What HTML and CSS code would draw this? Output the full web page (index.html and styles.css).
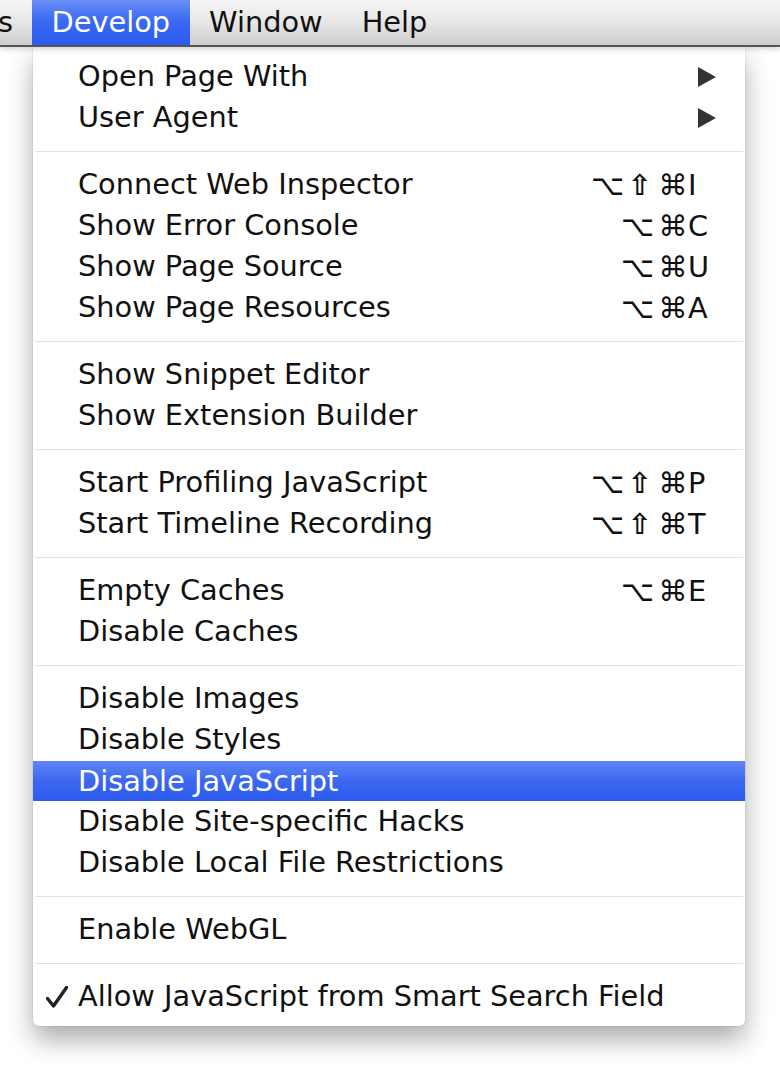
FILE: index.html
```html
<!DOCTYPE html>
<html>
<head>
<meta charset="utf-8">
<link rel="stylesheet" href="styles.css">
</head>
<body>
<div class="menubar">
  <span class="title prev">s</span>
  <span class="title active">Develop</span>
  <span class="title">Window</span>
  <span class="title">Help</span>
</div>
<div class="stage">
  <div class="menu">
    <div class="row"><span class="check"></span><span class="label">Open Page With</span><span class="sc"><svg class="arrow" viewBox="0 0 18 20"><path d="M0 0 L18 10 L0 20 Z"/></svg></span></div>
    <div class="row"><span class="check"></span><span class="label">User Agent</span><span class="sc"><svg class="arrow" viewBox="0 0 18 20"><path d="M0 0 L18 10 L0 20 Z"/></svg></span></div>
    <div class="sep"></div>
    <div class="row"><span class="check"></span><span class="label">Connect Web Inspector</span><span class="sc"><span class="mods"><span>⌥</span><span class="shift">⇧</span><span>⌘</span></span><span class="key">I</span></span></div>
    <div class="row"><span class="check"></span><span class="label">Show Error Console</span><span class="sc"><span class="mods"><span>⌥</span><span>⌘</span></span><span class="key">C</span></span></div>
    <div class="row"><span class="check"></span><span class="label">Show Page Source</span><span class="sc"><span class="mods"><span>⌥</span><span>⌘</span></span><span class="key">U</span></span></div>
    <div class="row"><span class="check"></span><span class="label">Show Page Resources</span><span class="sc"><span class="mods"><span>⌥</span><span>⌘</span></span><span class="key">A</span></span></div>
    <div class="sep"></div>
    <div class="row"><span class="check"></span><span class="label">Show Snippet Editor</span></div>
    <div class="row"><span class="check"></span><span class="label">Show Extension Builder</span></div>
    <div class="sep"></div>
    <div class="row"><span class="check"></span><span class="label">Start Profiling JavaScript</span><span class="sc"><span class="mods"><span>⌥</span><span class="shift">⇧</span><span>⌘</span></span><span class="key">P</span></span></div>
    <div class="row"><span class="check"></span><span class="label">Start Timeline Recording</span><span class="sc"><span class="mods"><span>⌥</span><span class="shift">⇧</span><span>⌘</span></span><span class="key">T</span></span></div>
    <div class="sep"></div>
    <div class="row"><span class="check"></span><span class="label">Empty Caches</span><span class="sc"><span class="mods"><span>⌥</span><span>⌘</span></span><span class="key">E</span></span></div>
    <div class="row"><span class="check"></span><span class="label">Disable Caches</span></div>
    <div class="sep"></div>
    <div class="row"><span class="check"></span><span class="label">Disable Images</span></div>
    <div class="row"><span class="check"></span><span class="label">Disable Styles</span></div>
    <div class="row selected"><span class="check"></span><span class="label">Disable JavaScript</span></div>
    <div class="row"><span class="check"></span><span class="label">Disable Site-specific Hacks</span></div>
    <div class="row"><span class="check"></span><span class="label">Disable Local File Restrictions</span></div>
    <div class="sep"></div>
    <div class="row"><span class="check"></span><span class="label">Enable WebGL</span></div>
    <div class="sep"></div>
    <div class="row"><span class="check"><svg viewBox="0 0 22 22"><path d="M1.5 12.5 L7.5 20 L20.5 1.5" /></svg></span><span class="label">Allow JavaScript from Smart Search Field</span></div>
  </div>
</div>
</body>
</html>
```
FILE: styles.css
```css
html, body {
  margin: 0;
  padding: 0;
  background: #ffffff;
}
body {
  width: 780px;
  height: 1071px;
  overflow: hidden;
  font-family: "DejaVu Sans", "Liberation Sans", sans-serif;
  font-size: 28.8px;
  color: #111;
}
.menubar {
  position: relative;
  z-index: 2;
  height: 45px;
  display: flex;
  align-items: stretch;
  background: linear-gradient(#f6f6f6, #e6e6e6 50%, #cdcdcd);
  border-bottom: 2px solid #555;
  box-shadow: 0 2px 6px rgba(0, 0, 0, 0.18);
  white-space: nowrap;
}
.title {
  padding: 0 19.5px;
  line-height: 45px;
  color: #111;
}
.title.prev {
  padding: 0 19px 0 0;
  margin-left: -2px;
}
.title.active {
  color: #fff;
  background: linear-gradient(#6a8ff6, #3c6af2 45%, #2a5af0);
}
.stage {
  padding-left: 33px;
}
.menu {
  width: 712px;
  box-sizing: border-box;
  padding: 9px 0 9px;
  background: #fff;
  border-radius: 0 0 6px 6px;
  box-shadow: 0 14px 26px rgba(0, 0, 0, 0.32), 0 0 2px rgba(0, 0, 0, 0.2);
}
.row {
  height: 41px;
  display: grid;
  grid-template-columns: 45px 1fr auto;
  align-items: center;
  padding-right: 29px;
  white-space: nowrap;
}
.row.selected {
  background: linear-gradient(#5e86f5, #3b67f0 50%, #2c5bee);
  color: #fff;
  margin-top: 1px;
  height: 40px;
}
.check {
  display: flex;
  align-items: center;
  justify-content: flex-end;
  padding-right: 10px;
}
.check svg {
  width: 22px;
  height: 22px;
  fill: none;
  stroke: #222;
  stroke-width: 3.4;
  stroke-linecap: round;
  stroke-linejoin: round;
}
.label {
  line-height: 41px;
}
.sc {
  display: flex;
  align-items: center;
  justify-content: flex-end;
}
.mods {
  display: flex;
  justify-content: flex-end;
  gap: 4px;
  padding-right: 1px;
}
.shift {
  font-weight: bold;
  padding-right: 2px;
}
.key {
  width: 28px;
  text-align: left;
}
.arrow {
  width: 18px;
  height: 20px;
  fill: #333;
}
.sep {
  height: 26px;
  display: flex;
  align-items: center;
  padding: 0 2px;
}
.sep::before {
  content: "";
  display: block;
  flex: 1;
  height: 1px;
  background: #e2e2e2;
}
```
